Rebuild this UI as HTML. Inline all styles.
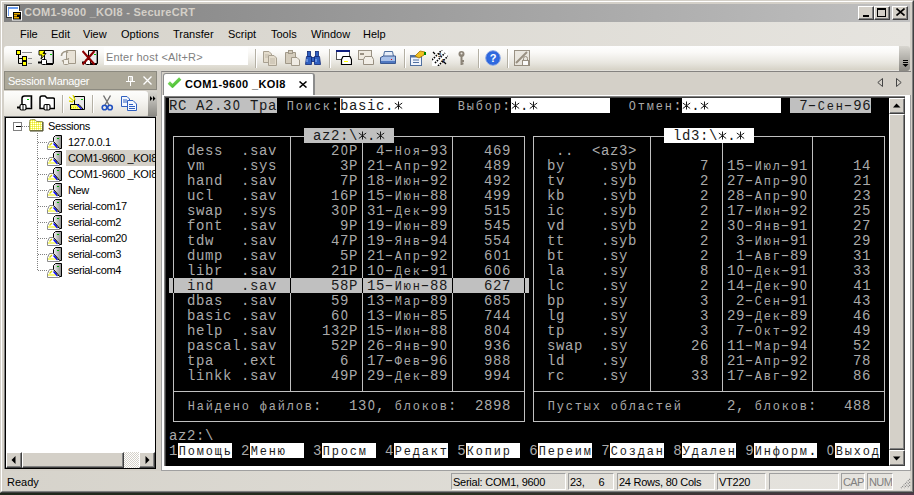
<!DOCTYPE html>
<html><head><meta charset="utf-8">
<style>
*{margin:0;padding:0;box-sizing:border-box}
html,body{width:914px;height:495px;overflow:hidden;background:linear-gradient(to right,#20281c,#2a3020 50%,#503848);font-family:"Liberation Sans",sans-serif;font-size:11px;color:#000}
.a{position:absolute}
#win{position:absolute;left:0;top:0;width:914px;height:493px;background:#d4d0c8;
 border-top:1px solid #d4d0c8;border-left:1px solid #d4d0c8;border-right:1px solid #404040;border-bottom:1px solid #404040}
#win2{position:absolute;left:0;top:0;right:0;bottom:0;border-top:1px solid #fff;border-left:1px solid #fff;border-right:1px solid #808080;border-bottom:1px solid #808080}
#title{position:absolute;left:4px;top:4px;width:906px;height:18px;background:linear-gradient(to right,#808080,#c0c0c0)}
#title .t{position:absolute;left:20px;top:2px;font-weight:bold;font-size:11px;color:#d4d0c8;white-space:nowrap;letter-spacing:0.27px}
.tb{position:absolute;top:6px;width:16px;height:14px;background:#d4d0c8;border-top:1px solid #fff;border-left:1px solid #fff;border-right:1px solid #404040;border-bottom:1px solid #404040;box-shadow:inset -1px -1px 0 #808080}
.menu{position:absolute;top:28px;font-size:11px;white-space:nowrap}
#toolbar{position:absolute;left:4px;top:46px;width:897px;height:24px;border-radius:3px;background:linear-gradient(to bottom,#fefefe 0%,#fbfaf8 25%,#e8e6df 70%,#d6d2c6 100%)}
.sep{position:absolute;width:2px;background:#b4b0a4;border-right:1px solid #fff}
.tr{position:absolute;left:169px;height:15px;line-height:15px;font-family:"Liberation Mono",monospace;font-size:14px;letter-spacing:0.6px;white-space:pre;margin-top:1px}
.tr u{text-decoration:none;display:inline-block;width:9px;transform:scale(0.85,0.88);transform-origin:50% 78%}
.tr u.h{transform:scaleX(1.6)}
.tr u.z{transform:scaleX(0.85)}
.tr u.s{transform:none;vertical-align:top;height:15px;margin-top:-1px}
.tr u.s svg{display:block}
.tree{position:absolute;left:68px;font-size:11px;white-space:nowrap}
.sp{position:absolute;top:473px;height:17px;border-top:1px solid #a0a0a0;border-left:1px solid #a0a0a0;border-right:1px solid #fff;border-bottom:1px solid #fff;font-size:11px;padding-left:1px;line-height:16px;letter-spacing:-0.25px;white-space:nowrap;overflow:hidden}
</style></head><body>
<div id="win"><div id="win2"></div></div>

<!-- title bar -->
<div id="title">
 <svg class="a" style="left:2px;top:1px" width="17" height="16" viewBox="0 0 17 16">
  <rect x="0.5" y="0.5" width="13" height="12" fill="#fff" stroke="#333"/>
  <rect x="2" y="2" width="10" height="2" fill="#6a9cf0"/>
  <rect x="2" y="4" width="1" height="7" fill="#6a9cf0"/>
  <rect x="6.5" y="6.5" width="9" height="8.5" fill="#000" stroke="#fff"/>
  <rect x="8" y="8" width="6" height="1.5" fill="#f0b000"/>
  <rect x="8" y="10" width="3" height="1.5" fill="#f0b000"/>
  <rect x="8" y="12" width="5" height="1.5" fill="#f0b000"/>
 </svg>
 <div class="t">COM1-9600 _KOI8 - SecureCRT</div>
</div>
<div class="tb" style="left:858px"><div class="a" style="left:4px;top:8px;width:6px;height:2px;background:#000"></div></div>
<div class="tb" style="left:874px"><div class="a" style="left:2px;top:1px;width:9px;height:9px;border:1px solid #000;border-top-width:2px"></div></div>
<div class="tb" style="left:892px"><svg class="a" style="left:3px;top:1px" width="9" height="8" viewBox="0 0 9 8"><path d="M0.5 0.5 L8.5 7.5 M8.5 0.5 L0.5 7.5" stroke="#000" stroke-width="1.6"/></svg></div>

<!-- menu -->
<div class="a" style="left:4px;top:22px;width:906px;height:49px;background:linear-gradient(to right,#d6d3cb,#e6e4df)"></div>
<div class="menu" style="left:20px">File</div>
<div class="menu" style="left:51px">Edit</div>
<div class="menu" style="left:83px">View</div>
<div class="menu" style="left:121px">Options</div>
<div class="menu" style="left:173px">Transfer</div>
<div class="menu" style="left:228px">Script</div>
<div class="menu" style="left:271px">Tools</div>
<div class="menu" style="left:311px">Window</div>
<div class="menu" style="left:363px">Help</div>

<!-- toolbar -->
<div id="toolbar"></div>
<div class="a" style="left:899px;top:46px;width:11px;height:25px;border-radius:0 3px 3px 0;background:linear-gradient(to bottom,#d8d6d0,#8c8a84)"></div>
<svg class="a" style="left:902px;top:60px" width="7" height="8"><path d="M1 0.5 H6 M1 2.5 H6" stroke="#000"/><path d="M0.5 4 H6.5 L3.5 7 Z" fill="#000"/></svg>
<div class="a" style="left:104px;top:47px;width:144px;height:18px;background:#fff"></div>
<div class="a" style="left:106px;top:51px;font-size:11px;letter-spacing:0.2px;color:#808080;white-space:nowrap">Enter host &lt;Alt+R&gt;</div>
<div class="sep" style="left:255px;top:49px;height:19px"></div>
<div class="sep" style="left:329px;top:49px;height:19px"></div>
<div class="sep" style="left:404px;top:49px;height:19px"></div>
<div class="sep" style="left:478px;top:49px;height:19px"></div>
<div class="sep" style="left:507px;top:49px;height:19px"></div>
<svg class="a" style="left:16px;top:50px" width="17" height="16" viewBox="0 0 17 16"><rect x="0.5" y="0.5" width="4" height="4" fill="#ff0" stroke="#000"/><rect x="6.5" y="6.5" width="4" height="4" fill="#ff0" stroke="#000"/><rect x="6.5" y="11.5" width="4" height="4" fill="#ff0" stroke="#000"/><path d="M2.5 5 V13.5 H6 M2.5 8.5 H6" stroke="#000" fill="none"/><path d="M6 2.5 H16 M12 8.5 H16 M12 13.5 H16" stroke="#8c8c8c"/></svg>
<svg class="a" style="left:38px;top:50px" width="16" height="16" viewBox="0 0 16 16"><path d="M6.5 0.5 H15.5 V13.5 H6.5 Z" fill="#ececec" stroke="#000"/><path d="M14.5 1 V13" stroke="#909090"/><rect x="12" y="4" width="2" height="1" fill="#00c000"/><path d="M0 12.5 H4" stroke="#000" stroke-width="2"/><rect x="3.5" y="9.5" width="5" height="5" rx="1" fill="#fff" stroke="#000"/><path d="M8 14.5 H15" stroke="#000"/><path d="M1 0.5 L7 0.5 L5 3.5 L8 3.5 L3 9 L4 5 L1 5 Z" fill="#ffff00" stroke="#000" stroke-width="0.9"/></svg>
<svg class="a" style="left:60px;top:50px" width="16" height="16" viewBox="0 0 16 16"><g stroke="#a09888" fill="none"><path d="M6.5 0.5 H15.5 V13.5 H6.5 Z" fill="#e8e2d6"/><path d="M1.5 6 A4 4 0 0 1 8 2.5 M8.5 8 A4 4 0 0 1 2 10.5" stroke-width="1.6"/><rect x="3.5" y="9.5" width="5" height="5" rx="1" fill="#f4f0e8"/></g></svg>
<svg class="a" style="left:82px;top:50px" width="16" height="16" viewBox="0 0 16 16"><path d="M6.5 0.5 H15.5 V13.5 H6.5 Z" fill="#ececec" stroke="#000"/><path d="M14.5 1 V13" stroke="#909090"/><rect x="12" y="4" width="2" height="1" fill="#00c000"/><path d="M0 12.5 H4" stroke="#000" stroke-width="2"/><rect x="3.5" y="9.5" width="5" height="5" rx="1" fill="#fff" stroke="#000"/><path d="M8 14.5 H15" stroke="#000"/><path d="M0.5 1 L12.5 14.5 M12.5 1 L0.5 14.5" stroke="#8c0000" stroke-width="2.2"/></svg>
<svg class="a" style="left:262px;top:50px" width="16" height="17" viewBox="0 0 16 17"><g stroke="#a8a090" fill="#e4dccc"><path d="M1.5 1.5 H7 L9.5 4 V12.5 H1.5 Z"/><path d="M6.5 5.5 H12 L14.5 8 V15.5 H6.5 Z"/></g><path d="M3 5 H7 M3 7 H6 M8 9 H13 M8 11 H13 M8 13 H13" stroke="#c0b8a8"/></svg>
<svg class="a" style="left:284px;top:50px" width="16" height="17" viewBox="0 0 16 17"><g stroke="#a09888" fill="#d4ccbc"><path d="M1.5 2.5 H11.5 V13.5 H1.5 Z"/><rect x="4.5" y="0.5" width="4" height="3"/><path d="M7.5 7.5 H13 L15.5 10 V15.5 H7.5 Z" fill="#f0ece4"/></g></svg>
<svg class="a" style="left:305px;top:50px" width="16" height="16" viewBox="0 0 16 16"><g fill="#3060c0" stroke="#102878" stroke-width="0.8"><rect x="2.5" y="1.5" width="3" height="5"/><rect x="10.5" y="1.5" width="3" height="5"/><path d="M1.5 6.5 H6.5 V14.5 H0.5 Z"/><path d="M9.5 6.5 H14.5 L15.5 14.5 H9.5 Z"/><rect x="6.5" y="7.5" width="3" height="4"/></g><path d="M2 9 V12 M11 9 V12" stroke="#9cc0ff"/></svg>
<svg class="a" style="left:336px;top:50px" width="16" height="16" viewBox="0 0 16 16"><rect x="0.5" y="0.5" width="13" height="9" fill="#fff" stroke="#555"/><rect x="0" y="0" width="14" height="2" fill="#102080"/><path d="M5.5 9.5 L7 6.5 H14 L15.5 9.5 V14.5 H5.5 Z" fill="#fff" stroke="#000" stroke-width="1.2"/><rect x="8" y="11" width="4" height="1" fill="#ff0"/></svg>
<svg class="a" style="left:358px;top:50px" width="16" height="16" viewBox="0 0 16 16"><g opacity="0.85"><rect x="0.5" y="0.5" width="13" height="9" fill="#eee8dc" stroke="#8a8070"/><rect x="2" y="3" width="4" height="2" fill="#8a8070"/><path d="M5.5 9.5 L7 6.5 H14 L15.5 9.5 V14.5 H5.5 Z" fill="#f4f0e8" stroke="#8a8070"/></g></svg>
<svg class="a" style="left:380px;top:50px" width="16" height="16" viewBox="0 0 16 16"><path d="M4.5 1.5 H12.5 L13.5 6.5 H3.5 Z" fill="#e8eef8" stroke="#5070a0"/><path d="M0.5 7.5 L3.5 6 H15.5 V13.5 H0.5 Z" fill="#a8c0e8" stroke="#3a5890"/><rect x="1" y="11" width="14" height="2" fill="#5078c0"/><rect x="11" y="9" width="1" height="1" fill="#d00"/></svg>
<svg class="a" style="left:410px;top:50px" width="16" height="16" viewBox="0 0 16 16"><rect x="0.5" y="5.5" width="11" height="10" fill="#f0f4fc" stroke="#5070a0"/><rect x="0.5" y="5.5" width="11" height="2" fill="#5070a0"/><path d="M3 10 H9 M3 12.5 H9" stroke="#5070a0"/><path d="M5 6 L10 1 L15 2 L14 5 L9 8 Z" fill="#f0c020" stroke="#a07000" stroke-width="0.8"/><rect x="14" y="2" width="2" height="3" fill="#080"/></svg>
<svg class="a" style="left:432px;top:50px" width="16" height="16" viewBox="0 0 16 16"><path d="M0 9 L9 0 L16 0 L16 7 L7 16 L0 16 Z" fill="#fff"/><path d="M0 10 L10 0 M3 13 L13 3 M6 16 L16 6" stroke="#000" stroke-width="1.6" stroke-dasharray="1.5 1.2"/><path d="M1 2 L3 4 M12 12 L14 14" stroke="#000" stroke-width="1.2"/><text x="6" y="7" font-size="6" font-family="Liberation Sans" font-weight="bold">5</text><text x="9" y="13" font-size="6" font-family="Liberation Sans" font-weight="bold">4</text></svg>
<svg class="a" style="left:456px;top:50px" width="12" height="16" viewBox="0 0 12 16"><circle cx="5.5" cy="4" r="3" fill="#8c8478"/><circle cx="5.5" cy="3.5" r="1" fill="#e8e4dc"/><path d="M5.5 6 V15 M5.5 11 H8 M5.5 13.5 H7.5" stroke="#8c8478" stroke-width="2"/></svg>
<svg class="a" style="left:485px;top:50px" width="16" height="16" viewBox="0 0 16 16"><circle cx="8" cy="8" r="7.3" fill="#2a60d8" stroke="#88a8e8" stroke-width="1"/><circle cx="8" cy="8" r="6" fill="#2f6ae0"/><text x="8" y="12.3" font-family="Liberation Sans" font-weight="bold" font-size="11" fill="#fff" text-anchor="middle">?</text></svg>
<svg class="a" style="left:514px;top:50px" width="16" height="16" viewBox="0 0 16 16"><g opacity="0.85"><rect x="0.5" y="0.5" width="15" height="15" fill="#e8e4dc" stroke="#8a8070"/><path d="M2 13 L13 2" stroke="#8a8070" stroke-width="2"/><rect x="8.5" y="10.5" width="6" height="5" fill="#fff" stroke="#8a8070"/><path d="M9.5 10.5 V8.5 A2 2 0 0 1 13.5 8.5 V10.5" stroke="#8a8070" fill="none"/></g></svg>

<!-- session manager -->
<div class="a" style="left:4px;top:71px;width:153px;height:19px;background:#aca899;border:1px solid #8c8a80"></div>
<div class="a" style="left:8px;top:75px;font-size:11px;letter-spacing:-0.3px;color:#fff;white-space:nowrap">Session Manager</div>
<svg class="a" style="left:126px;top:76px" width="9" height="10" viewBox="0 0 9 10"><path d="M2.5 0.5 H6.5 V5.5 H2.5 Z" fill="none" stroke="#fff"/><path d="M5 1 V5" stroke="#fff"/><path d="M0 5.5 H9 M4.5 6 V10" stroke="#fff"/></svg>
<svg class="a" style="left:143px;top:76px" width="9" height="9" viewBox="0 0 9 9"><path d="M0.5 0.5 L8.5 8.5 M8.5 0.5 L0.5 8.5" stroke="#fff" stroke-width="1.3"/></svg>
<div class="a" style="left:4px;top:91px;width:144px;height:25px;border-radius:0 3px 3px 0;background:linear-gradient(to bottom,#fdfdfc 0%,#f6f5f1 40%,#e3e0d8 100%)"></div>
<div class="a" style="left:148px;top:91px;width:9px;height:25px;background:linear-gradient(to bottom,#d8d6d0,#8c8a84)"></div>
<div class="a" style="left:4px;top:116px;width:152px;height:353px;background:#fff;border-top:1px solid #808080;border-left:1px solid #808080"></div>
<div class="a" style="left:5px;top:117px;width:151px;height:352px;border:1px solid #000"></div>
<svg class="a" style="left:17px;top:95px" width="16" height="16" viewBox="0 0 16 16"><path d="M7.5 1 H14.5 V13.5 H5 V3.5 Q5 1 7.5 1 Z" fill="#fff" stroke="#000" stroke-width="1.5"/><path d="M13.5 2 V13" stroke="#909090"/><rect x="10" y="4" width="2" height="1" fill="#00c000"/><path d="M0 12.5 H3" stroke="#000" stroke-width="2"/><rect x="3" y="9.5" width="6" height="5.5" rx="1.5" fill="#fff" stroke="#000" stroke-width="1.2"/><path d="M6 10 V15" stroke="#000"/></svg>
<svg class="a" style="left:39px;top:95px" width="16" height="16" viewBox="0 0 16 16"><path d="M1 3 Q1 1 3 1 H6 L8 3 H14 Q15.5 3 15.5 4.5 V13.5 H1 Z" fill="#fff" stroke="#000" stroke-width="1.5"/><rect x="5" y="9.5" width="6" height="5.5" rx="1.5" fill="#fff" stroke="#000" stroke-width="1.2"/><path d="M8 10 V15" stroke="#000"/></svg>
<svg class="a" style="left:69px;top:95px" width="16" height="16" viewBox="0 0 16 16"><path d="M5.5 1.5 H15.5 V14.5 H5.5 Z" fill="#e8e8e8" stroke="#000"/><rect x="12" y="4" width="2" height="1" fill="#0c0"/><path d="M1.5 9.5 H10 L14.5 14.5 H1.5 Z" fill="#ffff60" stroke="#000"/><path d="M2 12.5 H12" stroke="#d8d800" stroke-width="1.5" stroke-dasharray="1 1"/><path d="M8 9.5 L12.5 14" stroke="#0000ff" stroke-width="1.2"/><path d="M0 2 L5 6 M4 0 L6 5 M0 6 L4 7" stroke="#e0e000" stroke-width="1.3"/></svg>
<svg class="a" style="left:101px;top:95px" width="13" height="16" viewBox="0 0 13 16"><path d="M2.5 0.5 L8 10 M9.5 0.5 L4 10" stroke="#707070" stroke-width="1.4"/><circle cx="3.5" cy="12.5" r="2.3" fill="none" stroke="#2050c0" stroke-width="1.6"/><circle cx="9" cy="12.5" r="2.3" fill="none" stroke="#2050c0" stroke-width="1.6"/></svg>
<svg class="a" style="left:121px;top:95px" width="16" height="16" viewBox="0 0 16 16"><path d="M0.5 1.5 H6 L8.5 4 V11.5 H0.5 Z" fill="#f4f8ff" stroke="#3060c0"/><path d="M6.5 5.5 H12 L15.5 9 V15.5 H6.5 Z" fill="#f4f8ff" stroke="#3060c0"/><path d="M2 5 H6 M2 7 H6 M8 9.5 H12 M8 11.5 H14 M8 13.5 H14" stroke="#3060c0"/></svg>
<svg class="a" style="left:150px;top:96px" width="6" height="5"><path d="M0 0 L2.5 2.5 L0 5 Z M3 0 L5.5 2.5 L3 5 Z" fill="#000"/></svg>
<div class="sep" style="left:62px;top:95px;height:18px"></div>
<div class="sep" style="left:92px;top:95px;height:18px"></div>
<div class="a" style="left:6px;top:118px;width:149px;height:334px;overflow:hidden">
<div class="a" style="left:7px;top:4px;width:9px;height:9px;border:1px solid #808080;background:#fff"><div class="a" style="left:2px;top:3px;width:5px;height:1px;background:#000"></div></div>
<div class="a" style="left:16px;top:8px;width:7px;height:1px;background:repeating-linear-gradient(to right,#808080 0 1px,transparent 1px 2px)"></div>
<div class="a" style="left:31px;top:15px;width:1px;height:138px;background:repeating-linear-gradient(to bottom,#808080 0 1px,transparent 1px 2px)"></div>
<svg class="a" style="left:23px;top:1px" width="15" height="13" viewBox="0 0 15 13"><defs><pattern id="dz" width="2" height="2" patternUnits="userSpaceOnUse"><rect width="2" height="2" fill="#ffff60"/><rect width="1" height="1" fill="#fff"/><rect x="1" y="1" width="1" height="1" fill="#e0e040"/></pattern></defs><path d="M0.5 2.5 Q0.5 0.5 2.5 0.5 H6 L7.5 2.5 H13.5 V11.5 H0.5 Z" fill="url(#dz)" stroke="#9c9c60"/><path d="M1 12 H14 V3" stroke="#404020" fill="none"/></svg>
<div class="a" style="left:42px;top:2px;font-size:11px;letter-spacing:-0.35px;white-space:nowrap">Sessions</div>
<div class="a" style="left:32px;top:24px;width:9px;height:1px;background:repeating-linear-gradient(to right,#808080 0 1px,transparent 1px 2px)"></div>
<svg class="a" style="left:41px;top:17px" width="16" height="16" viewBox="0 0 16 16"><defs><linearGradient id="tg" x1="0" x2="1"><stop offset="0" stop-color="#f4f4f4"/><stop offset="1" stop-color="#8c8c8c"/></linearGradient></defs><path d="M8.5 0.5 H14.5 V13.5 H12.5 L6.5 6.5 V2.5 Z" fill="url(#tg)" stroke="#000"/><rect x="10" y="3" width="2" height="1" fill="#0a0"/><path d="M2.5 6.5 H6.5 L12.5 13.5 V14.5 H0.5 V10.5 Z" fill="#fff" stroke="#8c8c8c"/><path d="M6.5 6.5 L12.5 13.5" stroke="#000"/><path d="M1.5 12 H11" stroke="#f0f000" stroke-width="2" stroke-dasharray="1 1"/><path d="M6.5 8.5 L10.5 13" stroke="#0000ff" stroke-width="1.2"/><path d="M2.5 10.5 L5 8" stroke="#d0d000" stroke-width="1.2"/></svg>
<div class="a" style="left:62px;top:18px;font-size:11px;letter-spacing:-0.35px;white-space:nowrap">127.0.0.1</div>
<div class="a" style="left:60px;top:32px;width:100px;height:16px;background:#d4d0c8"></div>
<div class="a" style="left:32px;top:40px;width:9px;height:1px;background:repeating-linear-gradient(to right,#808080 0 1px,transparent 1px 2px)"></div>
<svg class="a" style="left:41px;top:33px" width="16" height="16" viewBox="0 0 16 16"><defs><linearGradient id="tg" x1="0" x2="1"><stop offset="0" stop-color="#f4f4f4"/><stop offset="1" stop-color="#8c8c8c"/></linearGradient></defs><path d="M8.5 0.5 H14.5 V13.5 H12.5 L6.5 6.5 V2.5 Z" fill="url(#tg)" stroke="#000"/><rect x="10" y="3" width="2" height="1" fill="#0a0"/><path d="M2.5 6.5 H6.5 L12.5 13.5 V14.5 H0.5 V10.5 Z" fill="#fff" stroke="#8c8c8c"/><path d="M6.5 6.5 L12.5 13.5" stroke="#000"/><path d="M1.5 12 H11" stroke="#f0f000" stroke-width="2" stroke-dasharray="1 1"/><path d="M6.5 8.5 L10.5 13" stroke="#0000ff" stroke-width="1.2"/><path d="M2.5 10.5 L5 8" stroke="#d0d000" stroke-width="1.2"/></svg>
<div class="a" style="left:62px;top:34px;font-size:11px;letter-spacing:-0.35px;white-space:nowrap">COM1-9600 _KOI8</div>
<div class="a" style="left:32px;top:56px;width:9px;height:1px;background:repeating-linear-gradient(to right,#808080 0 1px,transparent 1px 2px)"></div>
<svg class="a" style="left:41px;top:49px" width="16" height="16" viewBox="0 0 16 16"><defs><linearGradient id="tg" x1="0" x2="1"><stop offset="0" stop-color="#f4f4f4"/><stop offset="1" stop-color="#8c8c8c"/></linearGradient></defs><path d="M8.5 0.5 H14.5 V13.5 H12.5 L6.5 6.5 V2.5 Z" fill="url(#tg)" stroke="#000"/><rect x="10" y="3" width="2" height="1" fill="#0a0"/><path d="M2.5 6.5 H6.5 L12.5 13.5 V14.5 H0.5 V10.5 Z" fill="#fff" stroke="#8c8c8c"/><path d="M6.5 6.5 L12.5 13.5" stroke="#000"/><path d="M1.5 12 H11" stroke="#f0f000" stroke-width="2" stroke-dasharray="1 1"/><path d="M6.5 8.5 L10.5 13" stroke="#0000ff" stroke-width="1.2"/><path d="M2.5 10.5 L5 8" stroke="#d0d000" stroke-width="1.2"/></svg>
<div class="a" style="left:62px;top:50px;font-size:11px;letter-spacing:-0.35px;white-space:nowrap">COM1-9600 _KOI8</div>
<div class="a" style="left:32px;top:72px;width:9px;height:1px;background:repeating-linear-gradient(to right,#808080 0 1px,transparent 1px 2px)"></div>
<svg class="a" style="left:41px;top:65px" width="16" height="16" viewBox="0 0 16 16"><defs><linearGradient id="tg" x1="0" x2="1"><stop offset="0" stop-color="#f4f4f4"/><stop offset="1" stop-color="#8c8c8c"/></linearGradient></defs><path d="M8.5 0.5 H14.5 V13.5 H12.5 L6.5 6.5 V2.5 Z" fill="url(#tg)" stroke="#000"/><rect x="10" y="3" width="2" height="1" fill="#0a0"/><path d="M2.5 6.5 H6.5 L12.5 13.5 V14.5 H0.5 V10.5 Z" fill="#fff" stroke="#8c8c8c"/><path d="M6.5 6.5 L12.5 13.5" stroke="#000"/><path d="M1.5 12 H11" stroke="#f0f000" stroke-width="2" stroke-dasharray="1 1"/><path d="M6.5 8.5 L10.5 13" stroke="#0000ff" stroke-width="1.2"/><path d="M2.5 10.5 L5 8" stroke="#d0d000" stroke-width="1.2"/></svg>
<div class="a" style="left:62px;top:66px;font-size:11px;letter-spacing:-0.35px;white-space:nowrap">New</div>
<div class="a" style="left:32px;top:88px;width:9px;height:1px;background:repeating-linear-gradient(to right,#808080 0 1px,transparent 1px 2px)"></div>
<svg class="a" style="left:41px;top:81px" width="16" height="16" viewBox="0 0 16 16"><defs><linearGradient id="tg" x1="0" x2="1"><stop offset="0" stop-color="#f4f4f4"/><stop offset="1" stop-color="#8c8c8c"/></linearGradient></defs><path d="M8.5 0.5 H14.5 V13.5 H12.5 L6.5 6.5 V2.5 Z" fill="url(#tg)" stroke="#000"/><rect x="10" y="3" width="2" height="1" fill="#0a0"/><path d="M2.5 6.5 H6.5 L12.5 13.5 V14.5 H0.5 V10.5 Z" fill="#fff" stroke="#8c8c8c"/><path d="M6.5 6.5 L12.5 13.5" stroke="#000"/><path d="M1.5 12 H11" stroke="#f0f000" stroke-width="2" stroke-dasharray="1 1"/><path d="M6.5 8.5 L10.5 13" stroke="#0000ff" stroke-width="1.2"/><path d="M2.5 10.5 L5 8" stroke="#d0d000" stroke-width="1.2"/></svg>
<div class="a" style="left:62px;top:82px;font-size:11px;letter-spacing:-0.35px;white-space:nowrap">serial-com17</div>
<div class="a" style="left:32px;top:104px;width:9px;height:1px;background:repeating-linear-gradient(to right,#808080 0 1px,transparent 1px 2px)"></div>
<svg class="a" style="left:41px;top:97px" width="16" height="16" viewBox="0 0 16 16"><defs><linearGradient id="tg" x1="0" x2="1"><stop offset="0" stop-color="#f4f4f4"/><stop offset="1" stop-color="#8c8c8c"/></linearGradient></defs><path d="M8.5 0.5 H14.5 V13.5 H12.5 L6.5 6.5 V2.5 Z" fill="url(#tg)" stroke="#000"/><rect x="10" y="3" width="2" height="1" fill="#0a0"/><path d="M2.5 6.5 H6.5 L12.5 13.5 V14.5 H0.5 V10.5 Z" fill="#fff" stroke="#8c8c8c"/><path d="M6.5 6.5 L12.5 13.5" stroke="#000"/><path d="M1.5 12 H11" stroke="#f0f000" stroke-width="2" stroke-dasharray="1 1"/><path d="M6.5 8.5 L10.5 13" stroke="#0000ff" stroke-width="1.2"/><path d="M2.5 10.5 L5 8" stroke="#d0d000" stroke-width="1.2"/></svg>
<div class="a" style="left:62px;top:98px;font-size:11px;letter-spacing:-0.35px;white-space:nowrap">serial-com2</div>
<div class="a" style="left:32px;top:120px;width:9px;height:1px;background:repeating-linear-gradient(to right,#808080 0 1px,transparent 1px 2px)"></div>
<svg class="a" style="left:41px;top:113px" width="16" height="16" viewBox="0 0 16 16"><defs><linearGradient id="tg" x1="0" x2="1"><stop offset="0" stop-color="#f4f4f4"/><stop offset="1" stop-color="#8c8c8c"/></linearGradient></defs><path d="M8.5 0.5 H14.5 V13.5 H12.5 L6.5 6.5 V2.5 Z" fill="url(#tg)" stroke="#000"/><rect x="10" y="3" width="2" height="1" fill="#0a0"/><path d="M2.5 6.5 H6.5 L12.5 13.5 V14.5 H0.5 V10.5 Z" fill="#fff" stroke="#8c8c8c"/><path d="M6.5 6.5 L12.5 13.5" stroke="#000"/><path d="M1.5 12 H11" stroke="#f0f000" stroke-width="2" stroke-dasharray="1 1"/><path d="M6.5 8.5 L10.5 13" stroke="#0000ff" stroke-width="1.2"/><path d="M2.5 10.5 L5 8" stroke="#d0d000" stroke-width="1.2"/></svg>
<div class="a" style="left:62px;top:114px;font-size:11px;letter-spacing:-0.35px;white-space:nowrap">serial-com20</div>
<div class="a" style="left:32px;top:136px;width:9px;height:1px;background:repeating-linear-gradient(to right,#808080 0 1px,transparent 1px 2px)"></div>
<svg class="a" style="left:41px;top:129px" width="16" height="16" viewBox="0 0 16 16"><defs><linearGradient id="tg" x1="0" x2="1"><stop offset="0" stop-color="#f4f4f4"/><stop offset="1" stop-color="#8c8c8c"/></linearGradient></defs><path d="M8.5 0.5 H14.5 V13.5 H12.5 L6.5 6.5 V2.5 Z" fill="url(#tg)" stroke="#000"/><rect x="10" y="3" width="2" height="1" fill="#0a0"/><path d="M2.5 6.5 H6.5 L12.5 13.5 V14.5 H0.5 V10.5 Z" fill="#fff" stroke="#8c8c8c"/><path d="M6.5 6.5 L12.5 13.5" stroke="#000"/><path d="M1.5 12 H11" stroke="#f0f000" stroke-width="2" stroke-dasharray="1 1"/><path d="M6.5 8.5 L10.5 13" stroke="#0000ff" stroke-width="1.2"/><path d="M2.5 10.5 L5 8" stroke="#d0d000" stroke-width="1.2"/></svg>
<div class="a" style="left:62px;top:130px;font-size:11px;letter-spacing:-0.35px;white-space:nowrap">serial-com3</div>
<div class="a" style="left:32px;top:152px;width:9px;height:1px;background:repeating-linear-gradient(to right,#808080 0 1px,transparent 1px 2px)"></div>
<svg class="a" style="left:41px;top:145px" width="16" height="16" viewBox="0 0 16 16"><defs><linearGradient id="tg" x1="0" x2="1"><stop offset="0" stop-color="#f4f4f4"/><stop offset="1" stop-color="#8c8c8c"/></linearGradient></defs><path d="M8.5 0.5 H14.5 V13.5 H12.5 L6.5 6.5 V2.5 Z" fill="url(#tg)" stroke="#000"/><rect x="10" y="3" width="2" height="1" fill="#0a0"/><path d="M2.5 6.5 H6.5 L12.5 13.5 V14.5 H0.5 V10.5 Z" fill="#fff" stroke="#8c8c8c"/><path d="M6.5 6.5 L12.5 13.5" stroke="#000"/><path d="M1.5 12 H11" stroke="#f0f000" stroke-width="2" stroke-dasharray="1 1"/><path d="M6.5 8.5 L10.5 13" stroke="#0000ff" stroke-width="1.2"/><path d="M2.5 10.5 L5 8" stroke="#d0d000" stroke-width="1.2"/></svg>
<div class="a" style="left:62px;top:146px;font-size:11px;letter-spacing:-0.35px;white-space:nowrap">serial-com4</div>
</div>
<!-- tree hscroll -->
<div class="a" style="left:6px;top:452px;width:149px;height:16px;background:#d4d0c8"></div>
<div class="tb" style="left:6px;top:452px;width:16px;height:16px"><svg class="a" style="left:4px;top:3px" width="5" height="8"><path d="M4.5 0 L0.5 4 L4.5 8 Z" fill="#000"/></svg></div>
<div class="tb" style="left:22px;top:452px;width:102px;height:16px"></div>
<div class="a" style="left:124px;top:452px;width:15px;height:16px;background:repeating-conic-gradient(#fff 0 25%,#d4d0c8 0 50%) 0 0/2px 2px"></div>
<div class="tb" style="left:139px;top:452px;width:16px;height:16px"><svg class="a" style="left:5px;top:3px" width="5" height="8"><path d="M0.5 0 L4.5 4 L0.5 8 Z" fill="#000"/></svg></div>

<!-- tab area -->
<div class="a" style="left:161px;top:71px;width:750px;height:25px;border-top:1px solid #848280;border-left:1px solid #a0a0a0"></div>
<div class="a" style="left:163px;top:73px;width:152px;height:23px;background:#fff;border:1px solid #8c8c8c;border-bottom:none;border-right:2px solid #8c8c8c;border-radius:3px 3px 0 0"></div>
<div class="a" style="left:185px;top:78px;font-size:11px;font-weight:bold;letter-spacing:0.4px;white-space:nowrap">COM1-9600 _KOI8</div>
<svg class="a" style="left:167px;top:76px" width="15" height="13" viewBox="0 0 15 13"><defs><linearGradient id="ck" x1="0" y1="0" x2="1" y2="1"><stop offset="0" stop-color="#8ee070"/><stop offset="1" stop-color="#38b820"/></linearGradient></defs><path d="M1.8 6.5 L5.5 10.2 L13.2 2.5" stroke="url(#ck)" stroke-width="3.2" fill="none" stroke-linejoin="round"/></svg>
<svg class="a" style="left:299px;top:81px" width="8" height="7" viewBox="0 0 8 7"><path d="M0.5 0.5 L7.5 6.5 M7.5 0.5 L0.5 6.5" stroke="#000" stroke-width="1.5"/></svg>
<svg class="a" style="left:877px;top:78px" width="26" height="10" viewBox="0 0 26 10"><path d="M5.5 0.5 L0.8 4.5 L5.5 8.5 Z M19.5 0.5 L24.2 4.5 L19.5 8.5 Z" stroke="#444" stroke-width="1" fill="none"/></svg>

<!-- terminal frame -->
<div class="a" style="left:161px;top:95px;width:750px;height:376px;background:#fff;border-left:1px solid #a0a0a0;border-right:1px solid #a0a0a0;border-bottom:1px solid #a0a0a0"></div>
<div class="a" style="left:164px;top:96px;width:741px;height:370px;border-top:1px solid #808080;border-left:1px solid #808080"></div>
<div class="a" style="left:165px;top:97px;width:740px;height:369px;border-top:1px solid #404040;border-left:1px solid #404040"></div>
<div class="a" style="left:166px;top:98px;width:723px;height:368px;background:#000"></div>
<!-- scrollbar -->
<div class="a" style="left:889px;top:98px;width:16px;height:368px;background:#d4d0c8"></div>
<div class="tb" style="left:889px;top:98px;width:16px;height:16px"><svg class="a" style="left:3px;top:4px" width="8" height="5"><path d="M0 4.5 L3.5 0.5 L7.5 4.5 Z" fill="#000"/></svg></div>
<div class="tb" style="left:889px;top:114px;width:16px;height:336px"></div>
<div class="tb" style="left:889px;top:450px;width:16px;height:16px"><svg class="a" style="left:3px;top:5px" width="8" height="5"><path d="M0 0.5 L7.5 0.5 L3.5 4.5 Z" fill="#000"/></svg></div>

<div style="position:absolute;left:169px;top:98px;width:108px;height:15px;background:#c0c0c0"></div>
<div style="position:absolute;left:340px;top:98px;width:99px;height:15px;background:#ffffff"></div>
<div style="position:absolute;left:511px;top:98px;width:99px;height:15px;background:#ffffff"></div>
<div style="position:absolute;left:682px;top:98px;width:99px;height:15px;background:#ffffff"></div>
<div style="position:absolute;left:790px;top:98px;width:81px;height:15px;background:#c0c0c0"></div>
<div style="position:absolute;left:304px;top:128px;width:90px;height:15px;background:#c0c0c0"></div>
<div style="position:absolute;left:664px;top:128px;width:90px;height:15px;background:#ffffff"></div>
<div style="position:absolute;left:169px;top:278px;width:360px;height:15px;background:#c0c0c0"></div>
<div style="position:absolute;left:178px;top:443px;width:54px;height:15px;background:#ffffff"></div>
<div style="position:absolute;left:250px;top:443px;width:54px;height:15px;background:#ffffff"></div>
<div style="position:absolute;left:322px;top:443px;width:54px;height:15px;background:#ffffff"></div>
<div style="position:absolute;left:394px;top:443px;width:54px;height:15px;background:#ffffff"></div>
<div style="position:absolute;left:466px;top:443px;width:54px;height:15px;background:#ffffff"></div>
<div style="position:absolute;left:538px;top:443px;width:54px;height:15px;background:#ffffff"></div>
<div style="position:absolute;left:610px;top:443px;width:54px;height:15px;background:#ffffff"></div>
<div style="position:absolute;left:682px;top:443px;width:54px;height:15px;background:#ffffff"></div>
<div style="position:absolute;left:754px;top:443px;width:63px;height:15px;background:#ffffff"></div>
<div style="position:absolute;left:835px;top:443px;width:45px;height:15px;background:#ffffff"></div>
<div style="position:absolute;left:173px;top:136px;width:352px;height:1px;background:#c0c0c0"></div>
<div style="position:absolute;left:173px;top:391px;width:352px;height:1px;background:#c0c0c0"></div>
<div style="position:absolute;left:173px;top:421px;width:352px;height:1px;background:#c0c0c0"></div>
<div style="position:absolute;left:173px;top:136px;width:1px;height:286px;background:#c0c0c0"></div>
<div style="position:absolute;left:524px;top:136px;width:1px;height:286px;background:#c0c0c0"></div>
<div style="position:absolute;left:290px;top:136px;width:1px;height:256px;background:#c0c0c0"></div>
<div style="position:absolute;left:362px;top:136px;width:1px;height:256px;background:#c0c0c0"></div>
<div style="position:absolute;left:452px;top:136px;width:1px;height:256px;background:#c0c0c0"></div>
<div style="position:absolute;left:533px;top:136px;width:352px;height:1px;background:#c0c0c0"></div>
<div style="position:absolute;left:533px;top:391px;width:352px;height:1px;background:#c0c0c0"></div>
<div style="position:absolute;left:533px;top:421px;width:352px;height:1px;background:#c0c0c0"></div>
<div style="position:absolute;left:533px;top:136px;width:1px;height:286px;background:#c0c0c0"></div>
<div style="position:absolute;left:884px;top:136px;width:1px;height:286px;background:#c0c0c0"></div>
<div style="position:absolute;left:650px;top:136px;width:1px;height:256px;background:#c0c0c0"></div>
<div style="position:absolute;left:722px;top:136px;width:1px;height:256px;background:#c0c0c0"></div>
<div style="position:absolute;left:812px;top:136px;width:1px;height:256px;background:#c0c0c0"></div>
<div style="position:absolute;left:173px;top:278px;width:1px;height:15px;background:#000"></div>
<div style="position:absolute;left:290px;top:278px;width:1px;height:15px;background:#000"></div>
<div style="position:absolute;left:362px;top:278px;width:1px;height:15px;background:#000"></div>
<div style="position:absolute;left:452px;top:278px;width:1px;height:15px;background:#000"></div>
<div style="position:absolute;left:524px;top:278px;width:1px;height:15px;background:#000"></div>
<div style="position:absolute;left:304px;top:128px;width:90px;height:15px;background:#c0c0c0"></div>
<div style="position:absolute;left:664px;top:128px;width:90px;height:15px;background:#ffffff"></div>
<div class="tr" style="top:98px"><span style="color:#1a1a1a">RC A2.3<u class="z">O</u> Tpa </span><span style="color:#aaaaaa"><u>П</u><u>о</u><u>и</u><u>с</u><u>к</u>:</span><span style="color:#1a1a1a">basic.<u class="s"><svg width="9" height="15" viewBox="0 0 9 15"><path d="M4.5 3.5 V11.5 M0.8 5 L8.2 10.5 M8.2 5 L0.8 10.5" stroke="currentColor" stroke-width="1"/></svg></u>      </span><span style="color:#aaaaaa"><u>В</u><u>ы</u><u>б</u><u>о</u><u>р</u>:</span><span style="color:#1a1a1a"><u class="s"><svg width="9" height="15" viewBox="0 0 9 15"><path d="M4.5 3.5 V11.5 M0.8 5 L8.2 10.5 M8.2 5 L0.8 10.5" stroke="currentColor" stroke-width="1"/></svg></u>.<u class="s"><svg width="9" height="15" viewBox="0 0 9 15"><path d="M4.5 3.5 V11.5 M0.8 5 L8.2 10.5 M8.2 5 L0.8 10.5" stroke="currentColor" stroke-width="1"/></svg></u>          </span><span style="color:#aaaaaa"><u>О</u><u>т</u><u>м</u><u>е</u><u>н</u>:</span><span style="color:#1a1a1a"><u class="s"><svg width="9" height="15" viewBox="0 0 9 15"><path d="M4.5 3.5 V11.5 M0.8 5 L8.2 10.5 M8.2 5 L0.8 10.5" stroke="currentColor" stroke-width="1"/></svg></u>.<u class="s"><svg width="9" height="15" viewBox="0 0 9 15"><path d="M4.5 3.5 V11.5 M0.8 5 L8.2 10.5 M8.2 5 L0.8 10.5" stroke="currentColor" stroke-width="1"/></svg></u>          7<u class="h">-</u><u>С</u><u>е</u><u>н</u><u class="h">-</u>96  </span></div>
<div class="tr" style="top:113px"><span style="color:#aaaaaa">                                                                                </span></div>
<div class="tr" style="top:128px"><span style="color:#aaaaaa">                </span><span style="color:#1a1a1a">az2:\<u class="s"><svg width="9" height="15" viewBox="0 0 9 15"><path d="M4.5 3.5 V11.5 M0.8 5 L8.2 10.5 M8.2 5 L0.8 10.5" stroke="currentColor" stroke-width="1"/></svg></u>.<u class="s"><svg width="9" height="15" viewBox="0 0 9 15"><path d="M4.5 3.5 V11.5 M0.8 5 L8.2 10.5 M8.2 5 L0.8 10.5" stroke="currentColor" stroke-width="1"/></svg></u>                                ld3:\<u class="s"><svg width="9" height="15" viewBox="0 0 9 15"><path d="M4.5 3.5 V11.5 M0.8 5 L8.2 10.5 M8.2 5 L0.8 10.5" stroke="currentColor" stroke-width="1"/></svg></u>.<u class="s"><svg width="9" height="15" viewBox="0 0 9 15"><path d="M4.5 3.5 V11.5 M0.8 5 L8.2 10.5 M8.2 5 L0.8 10.5" stroke="currentColor" stroke-width="1"/></svg></u>                </span></div>
<div class="tr" style="top:143px"><span style="color:#aaaaaa">  dess  .sav      2<u class="z">O</u>P  4<u class="h">-</u><u>Н</u><u>о</u><u>я</u><u class="h">-</u>93    469     ..  &lt;az3&gt;                            </span></div>
<div class="tr" style="top:158px"><span style="color:#aaaaaa">  vm    .sys       3P 21<u class="h">-</u><u>А</u><u>п</u><u>р</u><u class="h">-</u>92    489    by    .syb       7  15<u class="h">-</u><u>И</u><u>ю</u><u>л</u><u class="h">-</u>91     14  </span></div>
<div class="tr" style="top:173px"><span style="color:#aaaaaa">  hand  .sav       7P 18<u class="h">-</u><u>И</u><u>ю</u><u>н</u><u class="h">-</u>92    492    tv    .syb       2  27<u class="h">-</u><u>А</u><u>п</u><u>р</u><u class="h">-</u>9<u class="z">O</u>     21  </span></div>
<div class="tr" style="top:188px"><span style="color:#aaaaaa">  ucl   .sav      16P 15<u class="h">-</u><u>И</u><u>ю</u><u>н</u><u class="h">-</u>88    499    kb    .syb       2  28<u class="h">-</u><u>А</u><u>п</u><u>р</u><u class="h">-</u>9<u class="z">O</u>     23  </span></div>
<div class="tr" style="top:203px"><span style="color:#aaaaaa">  swap  .sys      3<u class="z">O</u>P 31<u class="h">-</u><u>Д</u><u>е</u><u>к</u><u class="h">-</u>99    515    ic    .syb       2  17<u class="h">-</u><u>И</u><u>ю</u><u>н</u><u class="h">-</u>92     25  </span></div>
<div class="tr" style="top:218px"><span style="color:#aaaaaa">  font  .sav       9P 19<u class="h">-</u><u>И</u><u>ю</u><u>н</u><u class="h">-</u>89    545    vd    .syb       2  3<u class="z">O</u><u class="h">-</u><u>Я</u><u>н</u><u>в</u><u class="h">-</u>91     27  </span></div>
<div class="tr" style="top:233px"><span style="color:#aaaaaa">  tdw   .sav      47P 19<u class="h">-</u><u>Я</u><u>н</u><u>в</u><u class="h">-</u>94    554    tt    .syb       2   3<u class="h">-</u><u>И</u><u>ю</u><u>н</u><u class="h">-</u>91     29  </span></div>
<div class="tr" style="top:248px"><span style="color:#aaaaaa">  dump  .sav       5P 21<u class="h">-</u><u>А</u><u>п</u><u>р</u><u class="h">-</u>92    6<u class="z">O</u>1    bt    .sy        2   1<u class="h">-</u><u>А</u><u>в</u><u>г</u><u class="h">-</u>89     31  </span></div>
<div class="tr" style="top:263px"><span style="color:#aaaaaa">  libr  .sav      21P 1<u class="z">O</u><u class="h">-</u><u>Д</u><u>е</u><u>к</u><u class="h">-</u>91    6<u class="z">O</u>6    la    .sy        8  1<u class="z">O</u><u class="h">-</u><u>Д</u><u>е</u><u>к</u><u class="h">-</u>91     33  </span></div>
<div class="tr" style="top:278px"><span style="color:#aaaaaa">  </span><span style="color:#1a1a1a">ind   .sav      58P 15<u class="h">-</u><u>И</u><u>ю</u><u>н</u><u class="h">-</u>88    627    </span><span style="color:#aaaaaa">lc    .sy        2  14<u class="h">-</u><u>Д</u><u>е</u><u>к</u><u class="h">-</u>9<u class="z">O</u>     41  </span></div>
<div class="tr" style="top:293px"><span style="color:#aaaaaa">  dbas  .sav      59  13<u class="h">-</u><u>М</u><u>а</u><u>р</u><u class="h">-</u>89    685    bp    .sy        3   2<u class="h">-</u><u>С</u><u>е</u><u>н</u><u class="h">-</u>91     43  </span></div>
<div class="tr" style="top:308px"><span style="color:#aaaaaa">  basic .sav      6<u class="z">O</u>  13<u class="h">-</u><u>И</u><u>ю</u><u>н</u><u class="h">-</u>85    744    lg    .sy        3  29<u class="h">-</u><u>Д</u><u>е</u><u>к</u><u class="h">-</u>89     46  </span></div>
<div class="tr" style="top:323px"><span style="color:#aaaaaa">  help  .sav     132P 15<u class="h">-</u><u>И</u><u>ю</u><u>н</u><u class="h">-</u>88    8<u class="z">O</u>4    tp    .sy        3   7<u class="h">-</u><u>О</u><u>к</u><u>т</u><u class="h">-</u>92     49  </span></div>
<div class="tr" style="top:338px"><span style="color:#aaaaaa">  pascal.sav      52P 26<u class="h">-</u><u>Я</u><u>н</u><u>в</u><u class="h">-</u>9<u class="z">O</u>    936    swap  .sy       26  11<u class="h">-</u><u>М</u><u>а</u><u>р</u><u class="h">-</u>94     52  </span></div>
<div class="tr" style="top:353px"><span style="color:#aaaaaa">  tpa   .ext       6  17<u class="h">-</u><u>Ф</u><u>е</u><u>в</u><u class="h">-</u>96    988    ld    .sy        8  21<u class="h">-</u><u>А</u><u>п</u><u>р</u><u class="h">-</u>92     78  </span></div>
<div class="tr" style="top:368px"><span style="color:#aaaaaa">  linkk .sav      49P 29<u class="h">-</u><u>Д</u><u>е</u><u>к</u><u class="h">-</u>89    994    rc    .sy       33  17<u class="h">-</u><u>А</u><u>в</u><u>г</u><u class="h">-</u>92     86  </span></div>
<div class="tr" style="top:383px"><span style="color:#aaaaaa">                                                                                </span></div>
<div class="tr" style="top:398px"><span style="color:#aaaaaa">  <u>Н</u><u>а</u><u>й</u><u>д</u><u>е</u><u>н</u><u>о</u> <u>ф</u><u>а</u><u>й</u><u>л</u><u>о</u><u>в</u>:   13<u class="z">O</u>, <u>б</u><u>л</u><u>о</u><u>к</u><u>о</u><u>в</u>:  2898    <u>П</u><u>у</u><u>с</u><u>т</u><u>ы</u><u>х</u> <u>о</u><u>б</u><u>л</u><u>а</u><u>с</u><u>т</u><u>е</u><u>й</u>     2, <u>б</u><u>л</u><u>о</u><u>к</u><u>о</u><u>в</u>:   488  </span></div>
<div class="tr" style="top:413px"><span style="color:#aaaaaa">                                                                                </span></div>
<div class="tr" style="top:428px"><span style="color:#aaaaaa">az2:\                                                                           </span></div>
<div class="tr" style="top:443px"><span style="color:#aaaaaa">1</span><span style="color:#1a1a1a"><u>П</u><u>о</u><u>м</u><u>о</u><u>щ</u><u>ь</u> </span><span style="color:#aaaaaa">2</span><span style="color:#1a1a1a"><u>М</u><u>е</u><u>н</u><u>ю</u>   </span><span style="color:#aaaaaa">3</span><span style="color:#1a1a1a"><u>П</u><u>р</u><u>о</u><u>с</u><u>м</u>  </span><span style="color:#aaaaaa">4</span><span style="color:#1a1a1a"><u>Р</u><u>е</u><u>д</u><u>а</u><u>к</u><u>т</u> </span><span style="color:#aaaaaa">5</span><span style="color:#1a1a1a"><u>К</u><u>о</u><u>п</u><u>и</u><u>р</u>  </span><span style="color:#aaaaaa">6</span><span style="color:#1a1a1a"><u>П</u><u>е</u><u>р</u><u>е</u><u>и</u><u>м</u> </span><span style="color:#aaaaaa">7</span><span style="color:#1a1a1a"><u>С</u><u>о</u><u>з</u><u>д</u><u>а</u><u>н</u> </span><span style="color:#aaaaaa">8</span><span style="color:#1a1a1a"><u>У</u><u>д</u><u>а</u><u>л</u><u>е</u><u>н</u> </span><span style="color:#aaaaaa">9</span><span style="color:#1a1a1a"><u>И</u><u>н</u><u>ф</u><u>о</u><u>р</u><u>м</u>. </span><span style="color:#aaaaaa"><u class="z">O</u></span><span style="color:#1a1a1a"><u>В</u><u>ы</u><u>х</u><u>о</u><u>д</u> </span></div>

<!-- status bar -->
<div class="a" style="left:4px;top:471px;width:906px;height:19px;background:linear-gradient(to right,#d6d3cb,#e6e4df)"></div>
<div class="a" style="left:7px;top:476px;font-size:11px;white-space:nowrap">Ready</div>
<div class="sp" style="left:451px;width:115px">Serial: COM1, 9600</div>
<div class="sp" style="left:568px;width:46px">23,&nbsp;&nbsp;&nbsp;&nbsp;&nbsp;6</div>
<div class="sp" style="left:617px;width:98px">24 Rows, 80 Cols</div>
<div class="sp" style="left:717px;width:49px">VT220</div>
<div class="sp" style="left:769px;width:70px"></div>
<div class="sp" style="left:841px;width:24px;color:#808080;letter-spacing:-0.6px">CAP</div>
<div class="sp" style="left:867px;width:26px;color:#808080;letter-spacing:-0.6px">NUM</div>
<svg class="a" style="left:900px;top:478px" width="11" height="11" viewBox="0 0 11 11"><path d="M10 1 L1 10 M10 4 L4 10 M10 7 L7 10" stroke="#808080" stroke-width="1.2" stroke-dasharray="1 1"/></svg>
</body></html>
